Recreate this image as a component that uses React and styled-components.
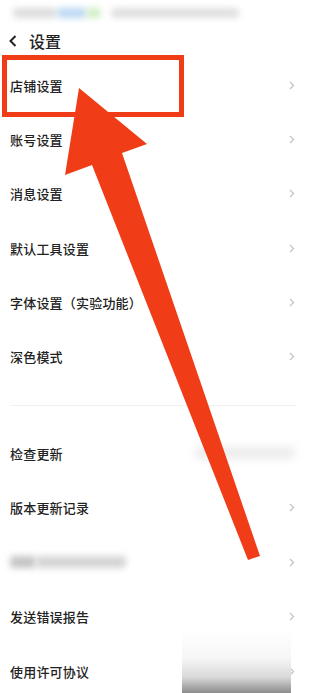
import React from "react";
import styled, { createGlobalStyle } from "styled-components";

const Global = createGlobalStyle`
  html, body { margin: 0; padding: 0; background: #fff; }
  body { font-family: "Noto Sans CJK SC", "Noto Sans", sans-serif; }
  * { box-sizing: border-box; }
`;

const Page = styled.div`
  position: relative;
  width: 304px;
  height: 693px;
  overflow: hidden;
  background: #fff;
`;

const StatusBar = styled.div`
  height: 26px;
  display: flex;
  align-items: center;
  gap: 10px;
  padding: 0 0 0 13px;
`;

const BlurBlock = styled.div`
  height: ${(p) => p.$h || 8}px;
  width: ${(p) => p.$w}px;
  background: ${(p) => p.$bg || "#e6e6e6"};
  filter: blur(${(p) => p.$blur || 3}px);
  border-radius: 4px;
`;

const BlurGroup = styled.div`
  display: flex;
  filter: blur(1px);
`;

const Header = styled.div`
  height: 30px;
  display: flex;
  align-items: center;
  padding-left: 9px;
  gap: 12px;
  margin-bottom: 2px;
`;

const Title = styled.span`
  font-size: 16px;
  font-weight: 500;
  color: #222;
  line-height: 1;
`;

const Group = styled.div`
  display: flex;
  flex-direction: column;
`;

const Row = styled.div`
  height: ${(p) => p.$h}px;
  display: flex;
  align-items: center;
  justify-content: space-between;
  padding: 0 9px 0 10px;
`;

const Label = styled.span`
  font-size: 13px;
  font-weight: 500;
  color: #222;
  letter-spacing: 0.2px;
`;

const Divider = styled.div`
  height: 1px;
  background: #f0f0f0;
  margin: 21px 7px 20px 10px;
`;

const Highlight = styled.div`
  position: absolute;
  left: 2px;
  top: 55px;
  width: 182px;
  height: 62px;
  border: 5px solid #f03c17;
`;

const ArrowSvg = styled.svg`
  position: absolute;
  left: 0;
  top: 0;
  pointer-events: none;
`;

const Fade = styled.div`
  position: absolute;
  left: 182px;
  top: 630px;
  width: 109px;
  height: 63px;
  background: linear-gradient(
    to bottom,
    rgba(255, 255, 255, 0) 0%,
    #f6f6f6 45%,
    #d8d8d8 75%,
    #8c8c8c 100%
  );
`;

const Chevron = () => (
  <svg width="6" height="9" viewBox="0 0 6 9">
    <polyline points="1,1 4.5,4.5 1,8" fill="none" stroke="#c4c4c4" strokeWidth="1.3" />
  </svg>
);

const Back = () => (
  <svg width="8" height="12" viewBox="0 0 8 12">
    <polyline points="6.5,1 1.5,6 6.5,11" fill="none" stroke="#222" strokeWidth="2" />
  </svg>
);

const group1 = ["店铺设置", "账号设置", "消息设置", "默认工具设置", "字体设置（实验功能）", "深色模式"];

export default function App() {
  return (
    <>
      <Global />
      <Page>
        <StatusBar>
          <BlurGroup>
            <BlurBlock $w={44} $h={10} $bg="#dcdcdc" />
            <BlurBlock $w={30} $h={10} $bg="#bcd8f4" />
            <BlurBlock $w={14} $h={10} $bg="#cdeec0" />
          </BlurGroup>
          <BlurBlock $w={128} $h={10} $bg="#e0e0e0" />
        </StatusBar>
        <Header>
          <Back />
          <Title>设置</Title>
        </Header>
        <Group>
          {group1.map((t) => (
            <Row key={t} $h={54.3}>
              <Label>{t}</Label>
              <Chevron />
            </Row>
          ))}
        </Group>
        <Divider />
        <Group>
          <Row $h={54.5}>
            <Label>检查更新</Label>
            <BlurBlock $w={100} $h={12} $bg="#ececec" $blur={4} />
          </Row>
          <Row $h={54.5}>
            <Label>版本更新记录</Label>
            <Chevron />
          </Row>
          <Row $h={54.5}>
            <BlurGroup>
              <BlurBlock $w={26} $h={12} $bg="#c4c4c4" $blur={3} />
              <BlurBlock $w={90} $h={12} $bg="#d4d4d4" $blur={3} />
            </BlurGroup>
            <Chevron />
          </Row>
          <Row $h={54.5}>
            <Label>发送错误报告</Label>
            <Chevron />
          </Row>
          <Row $h={54.5}>
            <Label>使用许可协议</Label>
            <Chevron />
          </Row>
        </Group>
        <Highlight />
        <ArrowSvg width="304" height="693" viewBox="0 0 304 693">
          <polygon
            points="79,88 147,144 122,153 260,556 248,560 92,165 65,175"
            fill="#f03c17"
          />
        </ArrowSvg>
        <Fade />
      </Page>
    </>
  );
}
